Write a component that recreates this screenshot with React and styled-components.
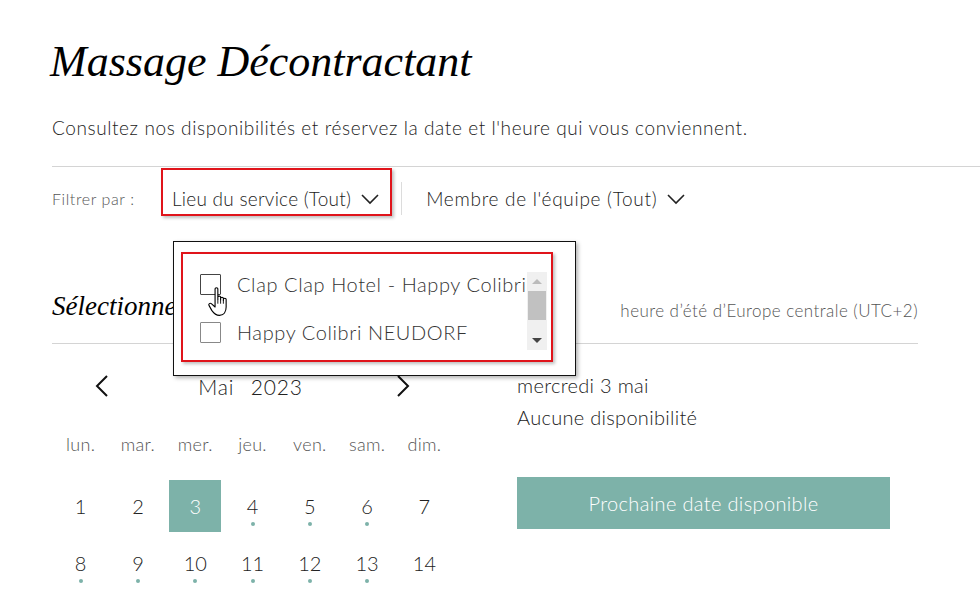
import React from 'react';
import styled, { createGlobalStyle } from 'styled-components';

const GlobalStyle = createGlobalStyle`
  html, body {
    margin: 0;
    padding: 0;
    background: #fff;
    overflow: hidden;
  }
  body {
    font-family: 'Lato', 'Liberation Sans', sans-serif;
    color: #222;
  }
`;

const ACCENT = '#7db2a9';

const Page = styled.div`
  width: 980px;
  height: 596px;
  padding: 34px 0 0 52px;
  box-sizing: border-box;
  overflow: hidden;
`;

const Title = styled.h1`
  margin: 0 0 0 -2px;
  font-family: 'Liberation Serif', serif;
  font-style: italic;
  font-weight: 400;
  font-size: 44px;
  line-height: 56px;
  color: #000;
`;

const Intro = styled.p`
  margin: 26px 0 0;
  font-size: 19px;
  font-weight: 300;
  letter-spacing: 0.6px;
  line-height: 24px;
  color: #222;
`;

const FilterBar = styled.div`
  margin-top: 26px;
  border-top: 1px solid #d4d4d4;
  display: flex;
  align-items: flex-start;
`;

const FilterLabel = styled.span`
  padding-top: 20px;
  width: 109px;
  font-size: 16px;
  font-weight: 300;
  letter-spacing: 0.6px;
  line-height: 24px;
  color: #555;
`;

const FilterWrap = styled.div`
  position: relative;
`;

const FilterButton = styled.button`
  display: flex;
  align-items: center;
  gap: 10px;
  margin-top: 1px;
  padding: 17px ${p => (p.$highlight ? 11 : 0)}px 3px ${p => (p.$highlight ? 9 : 0)}px;
  border: 2px solid ${p => (p.$highlight ? '#e0141b' : 'transparent')};
  box-shadow: ${p => (p.$highlight ? '2px 2px 3px rgba(0,0,0,0.25)' : 'none')};
  background: none;
  font-family: inherit;
  font-size: 19px;
  font-weight: 300;
  letter-spacing: ${p => p.$spacing}px;
  line-height: 24px;
  color: #222;
`;

const Divider = styled.span`
  width: 1px;
  height: 33px;
  margin: 15px 22px 0 9px;
  background: #dcdcdc;
`;

const Dropdown = styled.div`
  position: absolute;
  top: calc(100% + 25px);
  left: 12px;
  width: 403px;
  height: 135px;
  box-sizing: border-box;
  padding: 10px 0 0 7px;
  background: #fff;
  border: 1px solid #111;
  box-shadow: 2px 2px 4px rgba(0,0,0,0.3);
  z-index: 5;
`;

const ListFrame = styled.div`
  width: 372px;
  height: 110px;
  box-sizing: border-box;
  border: 2px solid #e0141b;
  box-shadow: 2px 2px 3px rgba(0,0,0,0.25);
  display: flex;
  padding: 16px 4px 12px 17px;
`;

const List = styled.ul`
  list-style: none;
  margin: 0;
  padding: 3px 0 0;
  flex: 1;
  display: flex;
  flex-direction: column;
  gap: 26px;
  overflow: hidden;
`;

const Option = styled.li`
  position: relative;
  display: flex;
  align-items: center;
  gap: 16px;
  height: 22px;
  font-size: 20px;
  font-weight: 300;
  letter-spacing: 0.6px;
  color: #333;
  white-space: nowrap;
`;

const Box = styled.span`
  flex: none;
  width: 19px;
  height: 19px;
  border: 1px solid ${p => (p.$dark ? '#444' : '#888')};
  border-radius: 1px;
`;

const Cursor = styled.svg`
  position: absolute;
  left: 7px;
  top: 13px;
  width: 25px;
  height: 31px;
`;

const Scrollbar = styled.div`
  flex: none;
  width: 20px;
  height: 78px;
  margin-top: 2px;
  background: #f0f0f0;
  display: flex;
  flex-direction: column;
  align-items: center;
`;

const ScrollArrow = styled.span`
  height: 19px;
  display: flex;
  align-items: center;
  justify-content: center;
  &::before {
    content: '';
    border-left: 5px solid transparent;
    border-right: 5px solid transparent;
    ${p => (p.$up ? 'border-bottom: 5px solid #bbb;' : 'border-top: 5px solid #444;')}
  }
`;

const ScrollThumb = styled.span`
  width: 18px;
  height: 29px;
  background: #c1c1c1;
`;

const ScrollTrack = styled.span`
  flex: 1;
`;

const Section = styled.section`
  width: 866px;
  margin-top: 72px;
`;

const SectionHead = styled.div`
  display: flex;
  justify-content: space-between;
  align-items: center;
  height: 37px;
  border-bottom: 1px solid #d4d4d4;
  padding-bottom: 18px;
`;

const SectionTitle = styled.h2`
  margin: 0;
  font-family: 'Liberation Serif', serif;
  font-style: italic;
  font-weight: 400;
  font-size: 27px;
  color: #000;
`;

const TimeZone = styled.span`
  padding-top: 8px;
  font-size: 17px;
  font-weight: 300;
  letter-spacing: 0.45px;
  color: #555;
`;

const Body = styled.div`
  display: flex;
  gap: 64px;
`;

const Calendar = styled.div`
  width: 401px;
`;

const NavRow = styled.div`
  display: flex;
  align-items: center;
  justify-content: space-between;
  height: 40px;
  margin-top: 22px;
  padding: 0 43px 0 43px;
`;

const NavButton = styled.button`
  border: none;
  background: none;
  padding: 0;
  width: 14px;
  height: 22px;
  display: flex;
  align-items: center;
  justify-content: center;
`;

const MonthLabel = styled.span`
  font-size: 21px;
  font-weight: 300;
  letter-spacing: 0.8px;
  word-spacing: 10px;
  color: #222;
  margin-left: -4px;
`;

const Grid = styled.div`
  display: grid;
  grid-template-columns: repeat(7, 57.3px);
`;

const WeekDay = styled.span`
  height: 40px;
  margin-top: 18px;
  margin-bottom: 13px;
  display: flex;
  align-items: center;
  justify-content: center;
  font-size: 18px;
  font-weight: 300;
  letter-spacing: 0.3px;
  color: #555;
`;

const DayCell = styled.div`
  position: relative;
  height: 57px;
  display: flex;
  align-items: center;
  justify-content: center;
`;

const DayButton = styled.span`
  width: 52px;
  height: 52px;
  display: flex;
  align-items: center;
  justify-content: center;
  font-size: 20px;
  font-weight: 300;
  color: ${p => (p.$selected ? '#fff' : '#222')};
  background: ${p => (p.$selected ? ACCENT : 'transparent')};
`;

const Dot = styled.span`
  position: absolute;
  left: 50%;
  top: calc(50% + 16px);
  width: 4px;
  height: 4px;
  margin-left: -2px;
  border-radius: 50%;
  background: ${ACCENT};
`;

const Side = styled.div`
  padding-top: 25px;
`;

const SideLine = styled.div`
  font-size: 20px;
  font-weight: 300;
  letter-spacing: 0.3px;
  line-height: 32px;
  color: #222;
`;

const NextButton = styled.button`
  margin-top: 44px;
  width: 373px;
  height: 52px;
  border: none;
  background: ${ACCENT};
  color: #fff;
  font-family: inherit;
  font-size: 20px;
  font-weight: 300;
  letter-spacing: 0.35px;
`;

const Chevron = ({ w = 18, h = 9 }) => (
  <svg width={w} height={h + 2} viewBox={`0 0 ${w} ${h + 2}`} fill="none">
    <path d={`M1 1 L${w / 2} ${h} L${w - 1} 1`} stroke="#222" strokeWidth="1.6" />
  </svg>
);

const Arrow = ({ dir }) => (
  <svg width="14" height="22" viewBox="0 0 14 22" fill="none">
    <path
      d={dir === 'left' ? 'M12 1 L2 11 L12 21' : 'M2 1 L12 11 L2 21'}
      stroke="#111"
      strokeWidth="2"
    />
  </svg>
);

const Hand = () => (
  <Cursor viewBox="0 0 22 28">
    <path
      d="M7 2.5 C7 1.3 9.5 1.3 9.5 2.5 L9.5 12 L9.5 10 C9.5 8.8 12 8.8 12 10 L12 12.5 L12 11 C12 9.8 14.5 9.8 14.5 11 L14.5 13 L14.5 12 C14.5 10.8 17 10.8 17 12 L17 19 C17 23 15 26.5 11 26.5 C7.5 26.5 6 25 4 22 L1.5 17.5 C0.8 16.2 2.5 15 3.6 16 L7 19 Z"
      fill="#fff"
      stroke="#000"
      strokeWidth="1"
      strokeLinejoin="round"
    />
    <path d="M12 12.5 L12 16 M14.5 13 L14.5 16 M9.5 12 L9.5 16" stroke="#000" strokeWidth="0.8" />
  </Cursor>
);

const weekDays = ['lun.', 'mar.', 'mer.', 'jeu.', 'ven.', 'sam.', 'dim.'];
const days = [
  { n: 1 }, { n: 2 }, { n: 3, selected: true }, { n: 4, dot: true }, { n: 5, dot: true },
  { n: 6, dot: true }, { n: 7 },
  { n: 8, dot: true }, { n: 9, dot: true }, { n: 10, dot: true }, { n: 11, dot: true },
  { n: 12, dot: true }, { n: 13, dot: true }, { n: 14 },
];

export default function App() {
  return (
    <>
      <GlobalStyle />
      <Page>
        <Title>Massage Décontractant</Title>
        <Intro>Consultez nos disponibilités et réservez la date et l'heure qui vous conviennent.</Intro>

        <FilterBar>
          <FilterLabel>Filtrer par :</FilterLabel>
          <FilterWrap>
            <FilterButton $highlight $spacing={0.25}>
              Lieu du service (Tout) <Chevron />
            </FilterButton>
            <Dropdown>
              <ListFrame>
                <List>
                  <Option>
                    <Box $dark />
                    Clap Clap Hotel - Happy Colibri
                    <Hand />
                  </Option>
                  <Option>
                    <Box />
                    Happy Colibri NEUDORF
                  </Option>
                </List>
                <Scrollbar>
                  <ScrollArrow $up />
                  <ScrollThumb />
                  <ScrollTrack />
                  <ScrollArrow />
                </Scrollbar>
              </ListFrame>
            </Dropdown>
          </FilterWrap>
          <Divider />
          <FilterButton $spacing={0.7}>
            Membre de l'équipe (Tout) <Chevron />
          </FilterButton>
        </FilterBar>

        <Section>
          <SectionHead>
            <SectionTitle>Sélectionnez une date et une heure</SectionTitle>
            <TimeZone>heure d’été d’Europe centrale (UTC+2)</TimeZone>
          </SectionHead>
          <Body>
            <Calendar>
              <NavRow>
                <NavButton><Arrow dir="left" /></NavButton>
                <MonthLabel>Mai 2023</MonthLabel>
                <NavButton><Arrow dir="right" /></NavButton>
              </NavRow>
              <Grid>
                {weekDays.map(d => <WeekDay key={d}>{d}</WeekDay>)}
                {days.map(d => (
                  <DayCell key={d.n}>
                    <DayButton $selected={d.selected}>{d.n}</DayButton>
                    {d.dot && <Dot />}
                  </DayCell>
                ))}
              </Grid>
            </Calendar>
            <Side>
              <SideLine>mercredi 3 mai</SideLine>
              <SideLine>Aucune disponibilité</SideLine>
              <NextButton>Prochaine date disponible</NextButton>
            </Side>
          </Body>
        </Section>
      </Page>
    </>
  );
}
